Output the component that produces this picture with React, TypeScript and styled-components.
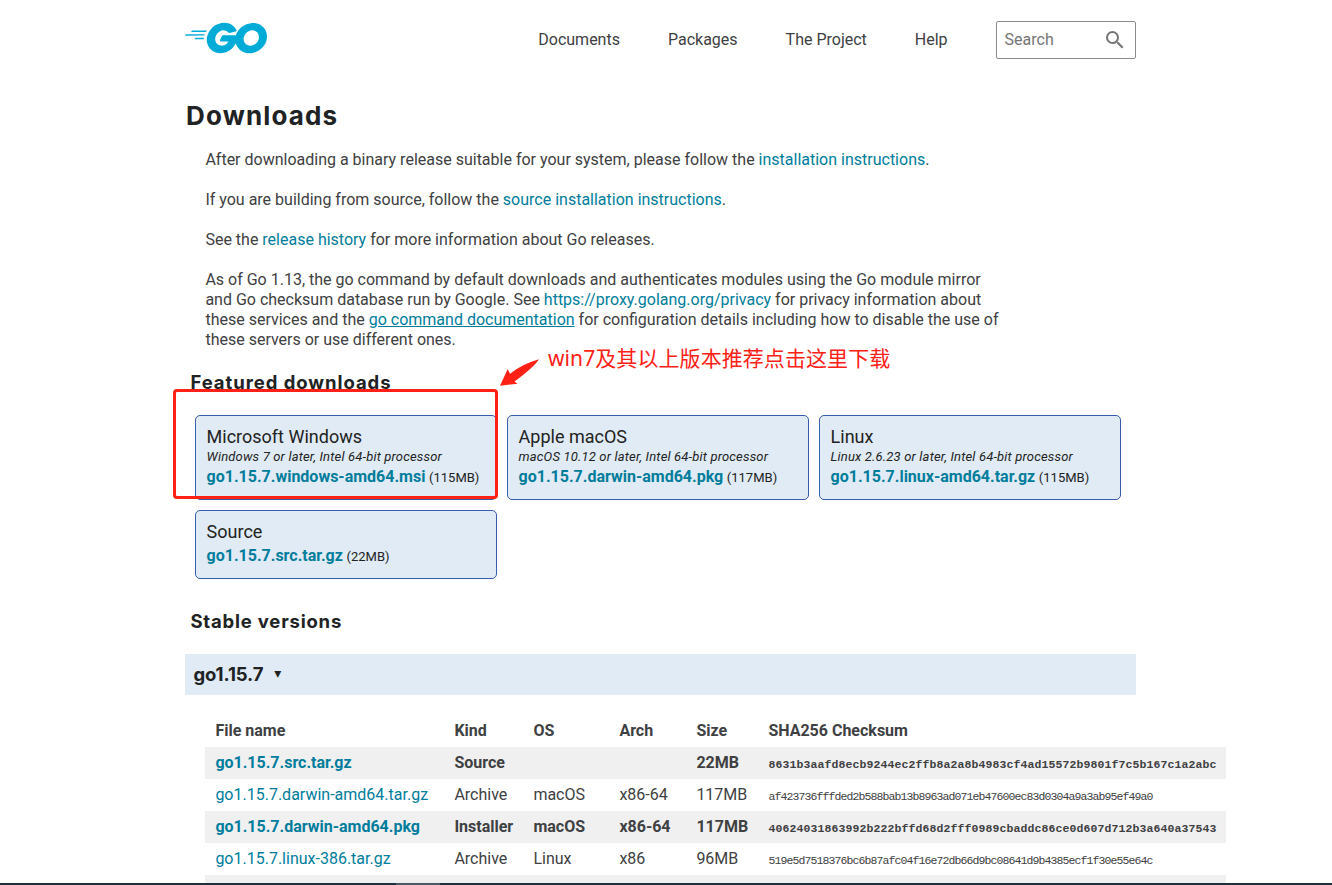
import React from 'react';
import styled, { createGlobalStyle } from 'styled-components';
import { SiGo } from 'react-icons/si';

const GlobalStyle = createGlobalStyle`
  * { box-sizing: border-box; }
  html, body { margin: 0; overflow: hidden; }
  body {
    background: #fff;
    color: #3e4042;
    font-family: Roboto, "Liberation Sans", sans-serif;
    font-size: 16px;
    line-height: 20px;
  }
`;

const Page = styled.div`
  position: relative;
  height: 885px;
  overflow: hidden;
`;

const Container = styled.div`
  width: 950.2px;
  margin-left: 185.4px;
`;

const Header = styled.header`
  display: flex;
  height: 80px;
  align-items: center;
`;

const Logo = styled.a`
  display: flex;
  align-items: center;
  width: 82px;
  height: 32px;
  margin-top: -4px;
  overflow: hidden;
  color: #00acd7;
  svg { flex: none; }
`;

const Nav = styled.nav`
  display: flex;
  gap: 48px;
  margin-left: auto;
  margin-right: 48px;
`;

const NavItem = styled.a`
  white-space: nowrap;
`;

const SearchBox = styled.div`
  display: flex;
  align-items: center;
  justify-content: space-between;
  width: 140px;
  height: 38px;
  padding: 0 8px;
  border: 1px solid #8a8d8f;
  border-radius: 2px;
  color: #757575;
`;

const Title = styled.h1`
  margin: 18px 0 0 0.6px;
  font: 700 26px/36px Inter, sans-serif;
  letter-spacing: 1.15px;
  color: #202224;
`;

const Intro = styled.div`
  display: flex;
  flex-direction: column;
  gap: 20px;
  margin: 16px 0 0 20px;
`;

const Paragraph = styled.p`
  margin: 0;
  white-space: nowrap;
`;

const Link = styled.a<{ $underline?: boolean }>`
  color: #007d9c;
  text-decoration: ${p => (p.$underline ? 'underline' : 'none')};
`;

const SectionTitle = styled.h2<{ $top: number; $tracking: number }>`
  margin: ${p => p.$top}px 0 0 5px;
  font: 700 18.5px/24px Inter, sans-serif;
  letter-spacing: ${p => p.$tracking}px;
  color: #202224;
`;

const Cards = styled.div`
  display: grid;
  grid-template-columns: repeat(3, 302px);
  grid-template-rows: 85px 69px;
  gap: 10px;
  margin: 21px 0 0 9.6px;
`;

const Card = styled.a`
  padding: 11px 10.6px 0;
  border: 1px solid #375eab;
  border-radius: 5px;
  background: #e0ebf5;
  color: #222;
  white-space: nowrap;
`;

const Platform = styled.div`
  font-size: 18px;
  line-height: 20px;
`;

const Requirement = styled.div`
  font-size: 13px;
  line-height: 19px;
  font-style: italic;
  letter-spacing: 0.17px;
`;

const Download = styled.div<{ $spaced?: boolean }>`
  margin-top: ${p => (p.$spaced ? 4 : 1)}px;
  font-size: 13px;
  b { color: #007d9c; font-size: 16px; margin-right: 0.4px; }
`;

const VersionBar = styled.div`
  display: flex;
  align-items: center;
  gap: 11px;
  height: 41px;
  margin-top: 21px;
  padding: 0 0 2px 8px;
  background: #e0ebf5;
  color: #202224;
  font: 700 18.5px/24px Inter, sans-serif;
  letter-spacing: -0.1px;
`;

const Arrow = styled.span`
  margin-top: -1px;
  font: 14px/14px "DejaVu Sans", sans-serif;
`;

const Table = styled.div`
  width: 1021px;
  margin: 20px 0 0 19.6px;
`;

const Row = styled.div<{ $bold?: boolean; $shaded?: boolean }>`
  display: grid;
  grid-template-columns: 239px 79px 86px 77px 72px 1fr;
  height: 32px;
  line-height: 32px;
  padding-left: 10.4px;
  white-space: nowrap;
  font-weight: ${p => (p.$bold ? 700 : 400)};
  background: ${p => (p.$shaded ? '#f0f0f0' : 'transparent')};
`;

const Checksum = styled.span<{ $bold?: boolean }>`
  padding-top: 2px;
  font-family: "Liberation Mono", monospace;
  font-size: 11.5px;
  letter-spacing: ${p => (p.$bold ? 0.1 : -0.9)}px;
`;

const Highlight = styled.div`
  position: absolute;
  left: 173px;
  top: 389px;
  width: 325px;
  height: 110px;
  border: 3px solid #ff2116;
  border-radius: 4px;
`;

const Pointer = styled.svg`
  position: absolute;
  left: 498px;
  top: 356px;
`;

const Note = styled.div`
  position: absolute;
  left: 548px;
  top: 343px;
  font: 21px/30px "Noto Sans", "Noto Sans CJK SC", sans-serif;
  letter-spacing: 0.08px;
  color: #ff2116;
  white-space: nowrap;
`;

const Taskbar = styled.div`
  position: absolute;
  left: 0;
  right: 0;
  bottom: 0;
  height: 2px;
  padding-left: 396px;
  background: #1e303e;
`;

const ActiveTask = styled.div`
  width: 44px;
  height: 2px;
  background: #4b5a65;
`;

const cards = [
  { name: 'Microsoft Windows', req: 'Windows 7 or later, Intel 64-bit processor', file: 'go1.15.7.windows-amd64.msi', size: '115MB' },
  { name: 'Apple macOS', req: 'macOS 10.12 or later, Intel 64-bit processor', file: 'go1.15.7.darwin-amd64.pkg', size: '117MB' },
  { name: 'Linux', req: 'Linux 2.6.23 or later, Intel 64-bit processor', file: 'go1.15.7.linux-amd64.tar.gz', size: '115MB' },
  { name: 'Source', req: '', file: 'go1.15.7.src.tar.gz', size: '22MB' },
];

const files = [
  { cells: ['Source', '', '', '22MB'], file: 'go1.15.7.src.tar.gz', sum: '8631b3aafd8ecb9244ec2ffb8a2a8b4983cf4ad15572b9801f7c5b167c1a2abc', bold: true },
  { cells: ['Archive', 'macOS', 'x86-64', '117MB'], file: 'go1.15.7.darwin-amd64.tar.gz', sum: 'af423736fffded2b588bab13b8963ad071eb47600ec83d0304a9a3ab95ef49a0', bold: false },
  { cells: ['Installer', 'macOS', 'x86-64', '117MB'], file: 'go1.15.7.darwin-amd64.pkg', sum: '40624031863992b222bffd68d2fff0989cbaddc86ce0d607d712b3a640a37543', bold: true },
  { cells: ['Archive', 'Linux', 'x86', '96MB'], file: 'go1.15.7.linux-386.tar.gz', sum: '519e5d7518376bc6b87afc04f16e72db66d9bc08641d9b4385ecf1f30e55e64c', bold: false },
];

export default function App() {
  return (
    <Page>
      <GlobalStyle />
      <Container>
        <Header>
          <Logo><SiGo size={82} /></Logo>
          <Nav>
            {['Documents', 'Packages', 'The Project', 'Help'].map(t => <NavItem key={t}>{t}</NavItem>)}
          </Nav>
          <SearchBox>
            Search
            <svg width="24" height="24" viewBox="0 0 24 24" fill="#757575">
              <path d="M15.5 14h-.79l-.28-.27A6.471 6.471 0 0 0 16 9.5 6.5 6.5 0 1 0 9.5 16c1.61 0 3.09-.59 4.23-1.57l.27.28v.79l5 4.99L20.49 19l-4.99-5zm-6 0C7.01 14 5 11.99 5 9.5S7.01 5 9.5 5 14 7.01 14 9.5 11.99 14 9.5 14z" />
            </svg>
          </SearchBox>
        </Header>
        <Title>Downloads</Title>
        <Intro>
          <Paragraph>After downloading a binary release suitable for your system, please follow the <Link>installation instructions</Link>.</Paragraph>
          <Paragraph>If you are building from source, follow the <Link>source installation instructions</Link>.</Paragraph>
          <Paragraph>See the <Link>release history</Link> for more information about Go releases.</Paragraph>
          <Paragraph>
            As of Go 1.13, the go command by default downloads and authenticates modules using the Go module mirror<br />
            and Go checksum database run by Google. See <Link>https://proxy.golang.org/privacy</Link> for privacy information about<br />
            these services and the <Link $underline>go command documentation</Link> for configuration details including how to disable the use of<br />
            these servers or use different ones.
          </Paragraph>
        </Intro>
        <SectionTitle $top={20} $tracking={0.95}>Featured downloads</SectionTitle>
        <Cards>
          {cards.map(c => (
            <Card key={c.name}>
              <Platform>{c.name}</Platform>
              {c.req && <Requirement>{c.req}</Requirement>}
              <Download $spaced={!c.req}><b>{c.file}</b> ({c.size})</Download>
            </Card>
          ))}
        </Cards>
        <SectionTitle $top={30} $tracking={0.8}>Stable versions</SectionTitle>
        <VersionBar>go1.15.7 <Arrow>▾</Arrow></VersionBar>
        <Table>
          <Row $bold>
            {['File name', 'Kind', 'OS', 'Arch', 'Size', 'SHA256 Checksum'].map(t => <span key={t}>{t}</span>)}
          </Row>
          {files.map(f => (
            <Row key={f.file} $bold={f.bold} $shaded={f.bold}>
              <Link>{f.file}</Link>
              {f.cells.map((c, i) => <span key={i}>{c}</span>)}
              <Checksum $bold={f.bold}>{f.sum}</Checksum>
            </Row>
          ))}
          <Row $shaded />
        </Table>
      </Container>
      <Highlight />
      <Pointer width="44" height="32" viewBox="0 0 44 32">
        <path d="M41 3.200 Q36 11 16.500 25.500 L19.500 27.800 L2 29.700 L9.700 13 L12 17.700 Q24 8 41 3.200 Z" fill="#ff2116" />
      </Pointer>
      <Note>win7及其以上版本推荐点击这里下载</Note>
      <Taskbar><ActiveTask /></Taskbar>
    </Page>
  );
}
